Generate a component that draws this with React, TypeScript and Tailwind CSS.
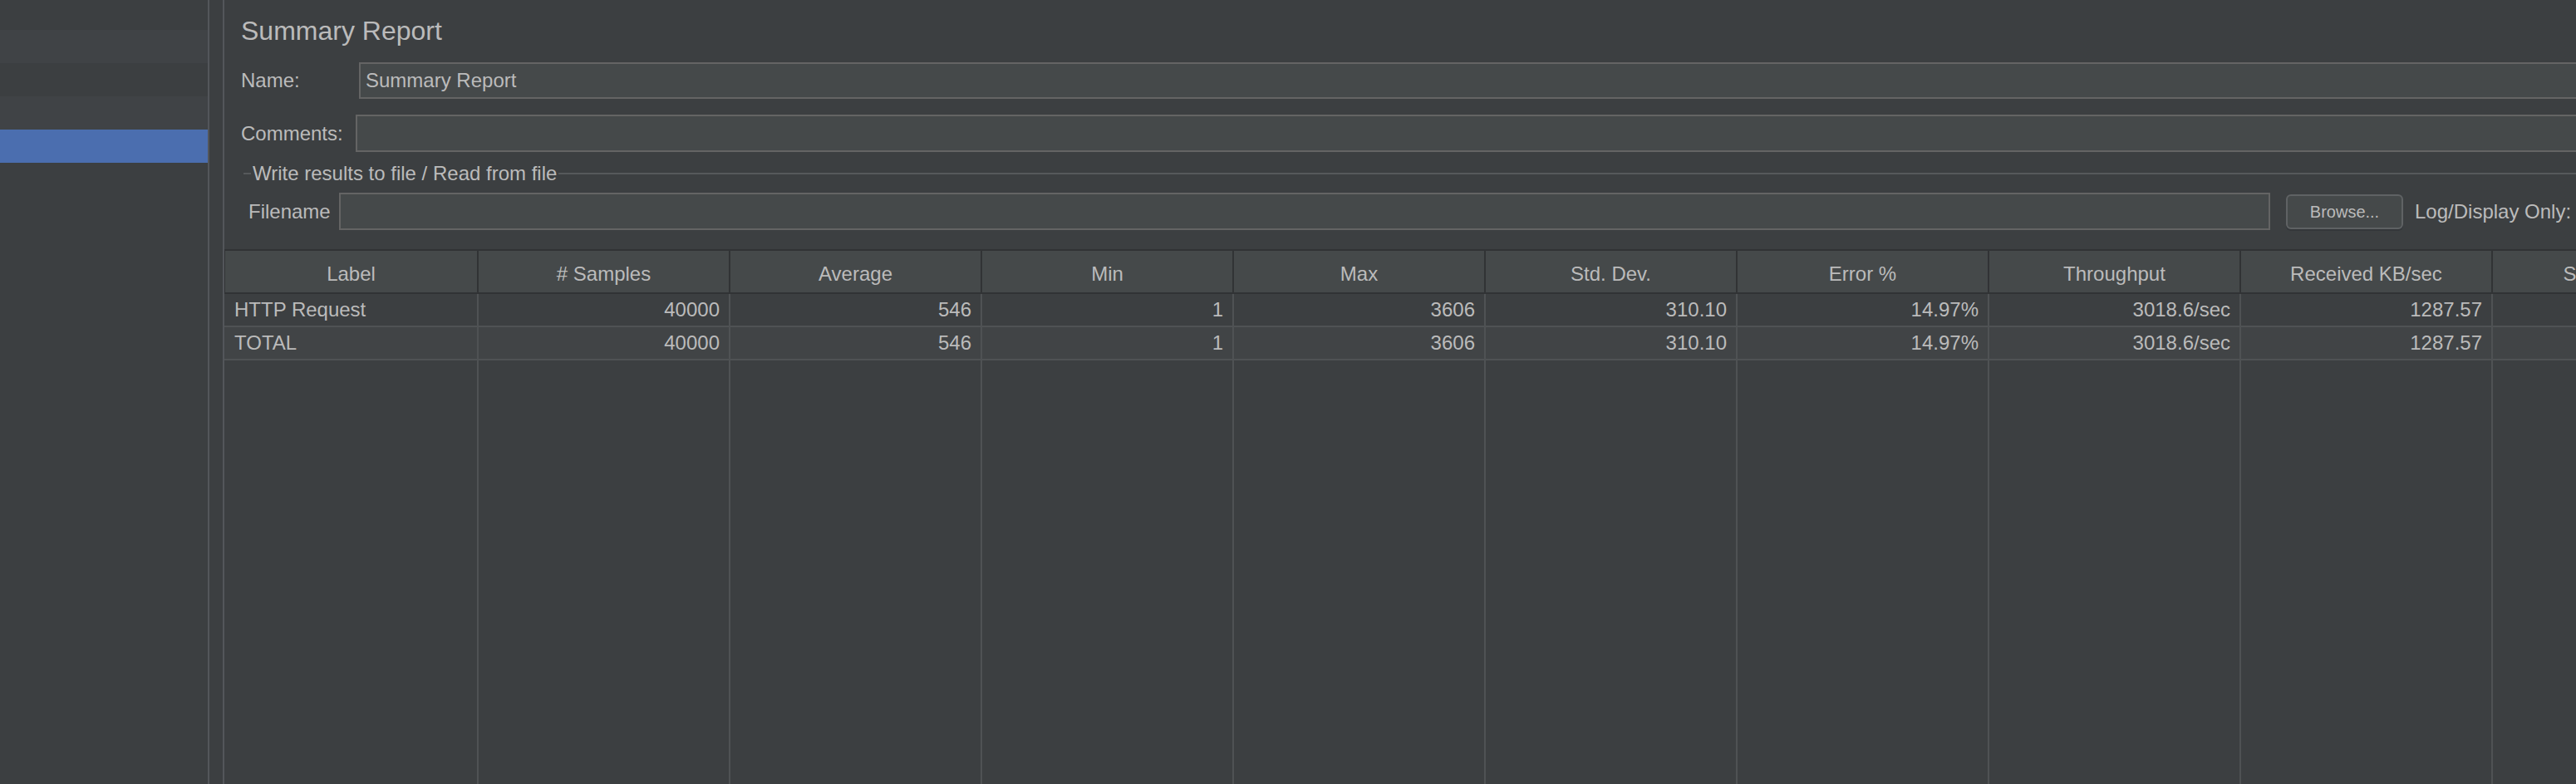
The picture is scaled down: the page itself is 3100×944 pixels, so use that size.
import React from 'react';

const columns = [
    'Label',
    '# Samples',
    'Average',
    'Min',
    'Max',
    'Std. Dev.',
    'Error %',
    'Throughput',
    'Received KB/sec',
    'Sent KB/sec',
];

const rows = [
    ['HTTP Request', '40000', '546', '1', '3606', '310.10', '14.97%', '3018.6/sec', '1287.57', '394.13'],
    ['TOTAL', '40000', '546', '1', '3606', '310.10', '14.97%', '3018.6/sec', '1287.57', '394.13'],
];

// first column is a bit wider so the grid lines land where the original ones do
const colWidth = (i: number) => (i === 0 ? 'w-[305px]' : 'w-[303px]');

export default function App() {
    return (
        <div
            className="flex w-[3100px] h-[944px] overflow-hidden bg-[#3c3f41] text-[#bbbbbb] text-[24px]"
            style={{ fontFamily: '"Liberation Sans", Arial, sans-serif' }}
        >
            {/* Tree sidebar */}
            <div className="flex flex-col w-[250px] shrink-0">
                <div className="h-[36px]" />
                <div className="h-[40px] bg-[#404346]" />
                <div className="h-[40px]" />
                <div className="h-[40px] bg-[#404346]" />
                <div className="h-[40px] bg-[#4b6eaf]" />
                <div className="flex-1" />
            </div>

            {/* Split pane divider */}
            <div className="w-[2px] shrink-0 bg-[#53565a]" />
            <div className="w-[16px] shrink-0" />
            <div className="w-[2px] shrink-0 bg-[#53565a]" />

            {/* Main panel */}
            <div className="flex flex-col flex-1 min-w-0 overflow-hidden">
                <div className="pl-[20px] pt-[19px]">
                    <h1 className="text-[32px] leading-[37px] whitespace-nowrap">Summary Report</h1>

                    {/* Name */}
                    <div className="flex items-center h-[44px] mt-[19px]">
                        <span className="w-[142px] shrink-0">Name:</span>
                        <div className="flex items-center w-[2800px] shrink-0 h-full bg-[#45494a] border-2 border-[#646464] pl-[6px] whitespace-nowrap">
                            Summary Report
                        </div>
                    </div>

                    {/* Comments */}
                    <div className="flex items-center h-[45px] mt-[19px]">
                        <span className="w-[138px] shrink-0">Comments:</span>
                        <div className="w-[2800px] shrink-0 h-full bg-[#45494a] border-2 border-[#646464]" />
                    </div>

                    {/* Write results to file */}
                    <div className="flex items-center h-[24px] mt-[14px] ml-[3px]">
                        <div className="w-[9px] h-[2px] bg-[#56595b] shrink-0" />
                        <span className="px-[2px] whitespace-nowrap leading-[24px]">
                            Write results to file / Read from file
                        </span>
                        <div className="flex-1 h-[2px] bg-[#56595b]" />
                    </div>

                    <div className="flex items-center h-[45px] mt-[11px] pl-[9px] whitespace-nowrap">
                        <span className="w-[109px] shrink-0">Filename</span>
                        <div className="w-[2324px] shrink-0 h-full bg-[#45494a] border-2 border-[#646464]" />
                        <button className="ml-[19px] w-[141px] h-[42px] shrink-0 rounded-[6px] border-2 border-[#5f6264] bg-[#45494a] text-[20px] text-[#bbbbbb] shadow-[0_2px_0_#34373a]">
                            Browse...
                        </button>
                        <span className="ml-[14px] shrink-0">Log/Display Only:</span>
                    </div>
                </div>

                {/* Results table */}
                <div className="flex flex-col flex-1 mt-[23px] border-t-2 border-[#313335]">
                    <div className="flex h-[52px] border-b-2 border-[#313335]">
                        <div className="w-[1px] shrink-0 bg-[#313335]" />
                        {columns.map((c, i) => (
                            <div
                                key={c}
                                className={`${colWidth(i)} shrink-0 flex items-center justify-center pt-[5px] bg-[#45494a] border-r-2 border-[#313335] whitespace-nowrap`}
                            >
                                {c}
                            </div>
                        ))}
                    </div>

                    {rows.map((r, ri) => (
                        <div
                            key={ri}
                            className={`flex h-[40px] border-b-2 border-[#4f5254] ${ri === 1 ? 'bg-[#414446]' : ''}`}
                        >
                            <div className="w-[1px] shrink-0" />
                            {r.map((v, i) => (
                                <div
                                    key={i}
                                    className={`${colWidth(i)} shrink-0 flex items-center border-r-2 border-[#4f5254] whitespace-nowrap ${
                                        i === 0 ? 'pl-[11px]' : 'justify-end pr-[11px]'
                                    }`}
                                >
                                    {v}
                                </div>
                            ))}
                        </div>
                    ))}

                    {/* empty grid area */}
                    <div className="flex flex-1">
                        <div className="w-[1px] shrink-0" />
                        {columns.map((c, i) => (
                            <div key={c} className={`${colWidth(i)} shrink-0 border-r-2 border-[#4f5254]`} />
                        ))}
                    </div>
                </div>
            </div>
        </div>
    );
}
